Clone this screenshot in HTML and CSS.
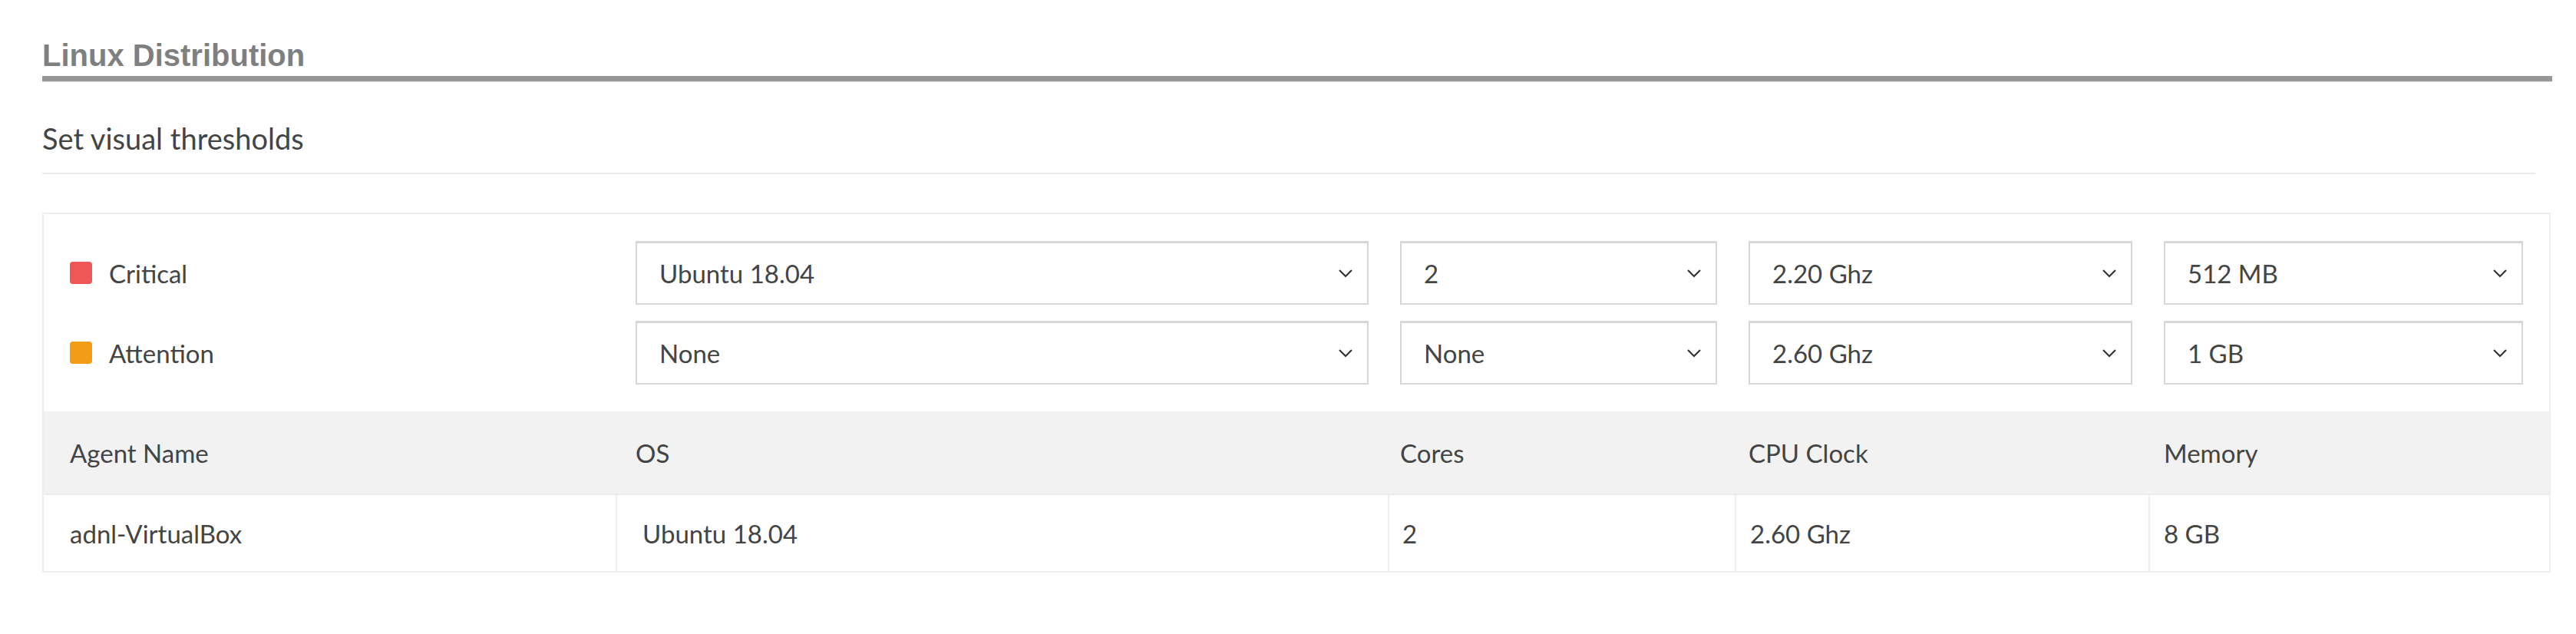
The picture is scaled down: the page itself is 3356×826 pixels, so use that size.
FILE: index.html
```html
<!DOCTYPE html>
<html lang="en">
<head>
<meta charset="utf-8">
<title>Linux Distribution</title>
<link rel="stylesheet" href="styles.css">
</head>
<body>
<div class="page">
  <h2 class="section-title">Linux Distribution</h2>
  <h3 class="subtitle">Set visual thresholds</h3>

  <div class="card">
    <div class="thresholds">
      <div class="threshold-row">
        <div class="level"><span class="swatch swatch-critical"></span><span>Critical</span></div>
        <div class="select"><span>Ubuntu 18.04</span><svg class="chev" viewBox="0 0 20 12"><path d="M2 2 L10 10 L18 2"/></svg></div>
        <div class="select"><span>2</span><svg class="chev" viewBox="0 0 20 12"><path d="M2 2 L10 10 L18 2"/></svg></div>
        <div class="select"><span>2.20 Ghz</span><svg class="chev" viewBox="0 0 20 12"><path d="M2 2 L10 10 L18 2"/></svg></div>
        <div class="select"><span>512 MB</span><svg class="chev" viewBox="0 0 20 12"><path d="M2 2 L10 10 L18 2"/></svg></div>
      </div>
      <div class="threshold-row">
        <div class="level"><span class="swatch swatch-attention"></span><span>Attention</span></div>
        <div class="select"><span>None</span><svg class="chev" viewBox="0 0 20 12"><path d="M2 2 L10 10 L18 2"/></svg></div>
        <div class="select"><span>None</span><svg class="chev" viewBox="0 0 20 12"><path d="M2 2 L10 10 L18 2"/></svg></div>
        <div class="select"><span>2.60 Ghz</span><svg class="chev" viewBox="0 0 20 12"><path d="M2 2 L10 10 L18 2"/></svg></div>
        <div class="select"><span>1 GB</span><svg class="chev" viewBox="0 0 20 12"><path d="M2 2 L10 10 L18 2"/></svg></div>
      </div>
    </div>

    <div class="table-head">
      <div>Agent Name</div>
      <div>OS</div>
      <div>Cores</div>
      <div>CPU Clock</div>
      <div>Memory</div>
    </div>
    <div class="table-row">
      <div class="cell c1">adnl-VirtualBox</div>
      <div class="cell c2">Ubuntu 18.04</div>
      <div class="cell c3">2</div>
      <div class="cell c4">2.60 Ghz</div>
      <div class="cell c5">8 GB</div>
    </div>
  </div>
</div>
</body>
</html>
```
FILE: styles.css
```css
html, body {
  margin: 0;
  padding: 0;
  background: #ffffff;
}

.page {
  padding: 50px 31px 40px 55px;
  font-family: "Lato", "Noto Sans", sans-serif;
  color: #444444;
}

.section-title {
  margin: 0;
  font-family: "Liberation Sans", Arial, sans-serif;
  font-weight: bold;
  font-size: 40px;
  line-height: 44px;
  color: #7f7f7f;
  padding-bottom: 5px;
  border-bottom: 7px solid #979797;
  box-shadow: 0 1px 0 #e6e6e6;
}

.subtitle {
  margin: 50px 22px 0 0;
  font-weight: normal;
  font-size: 38px;
  line-height: 48px;
  padding-bottom: 21px;
  border-bottom: 2px solid #ebebeb;
  color: #444444;
}

.card {
  margin: 50px 2px 0 0;
  border: 2px solid #eeeeee;
  font-size: 33px;
}

.thresholds {
  padding: 35px 34px;
  display: flex;
  flex-direction: column;
  gap: 21px;
}

.threshold-row,
.table-head {
  display: grid;
  grid-template-columns: 696px 955px 413px 500px 468px;
  column-gap: 41px;
  align-items: center;
}

.level {
  display: flex;
  align-items: center;
  gap: 22px;
}

.swatch {
  width: 29px;
  height: 29px;
  border-radius: 4px;
  flex: none;
}

.swatch-critical { background: #ef5656; }
.swatch-attention { background: #f29c17; }

.select {
  height: 83px;
  box-sizing: border-box;
  border: 2px solid #d7d7d7;
  border-top-width: 3px;
  display: flex;
  align-items: center;
  justify-content: space-between;
  padding: 0 18px 0 29px;
  background: #ffffff;
}

.chev {
  width: 20px;
  height: 12px;
  fill: none;
  stroke: #333333;
  stroke-width: 2.2;
}

.table-head {
  background: #f2f2f2;
  height: 107px;
  padding: 0 34px;
}

.table-row {
  display: grid;
  grid-template-columns: 745px 1006px 452px 539px 1fr;
  border-top: 2px solid #ececec;
  height: 99px;
}

.cell {
  display: flex;
  align-items: center;
}

.c1 { padding-left: 34px; }
.c2 { padding-left: 33px; border-left: 2px solid #eeeeee; }
.c3 { padding-left: 17px; border-left: 2px solid #eeeeee; }
.c4 { padding-left: 18px; border-left: 2px solid #eeeeee; }
.c5 { padding-left: 18px; border-left: 2px solid #eeeeee; }
```
